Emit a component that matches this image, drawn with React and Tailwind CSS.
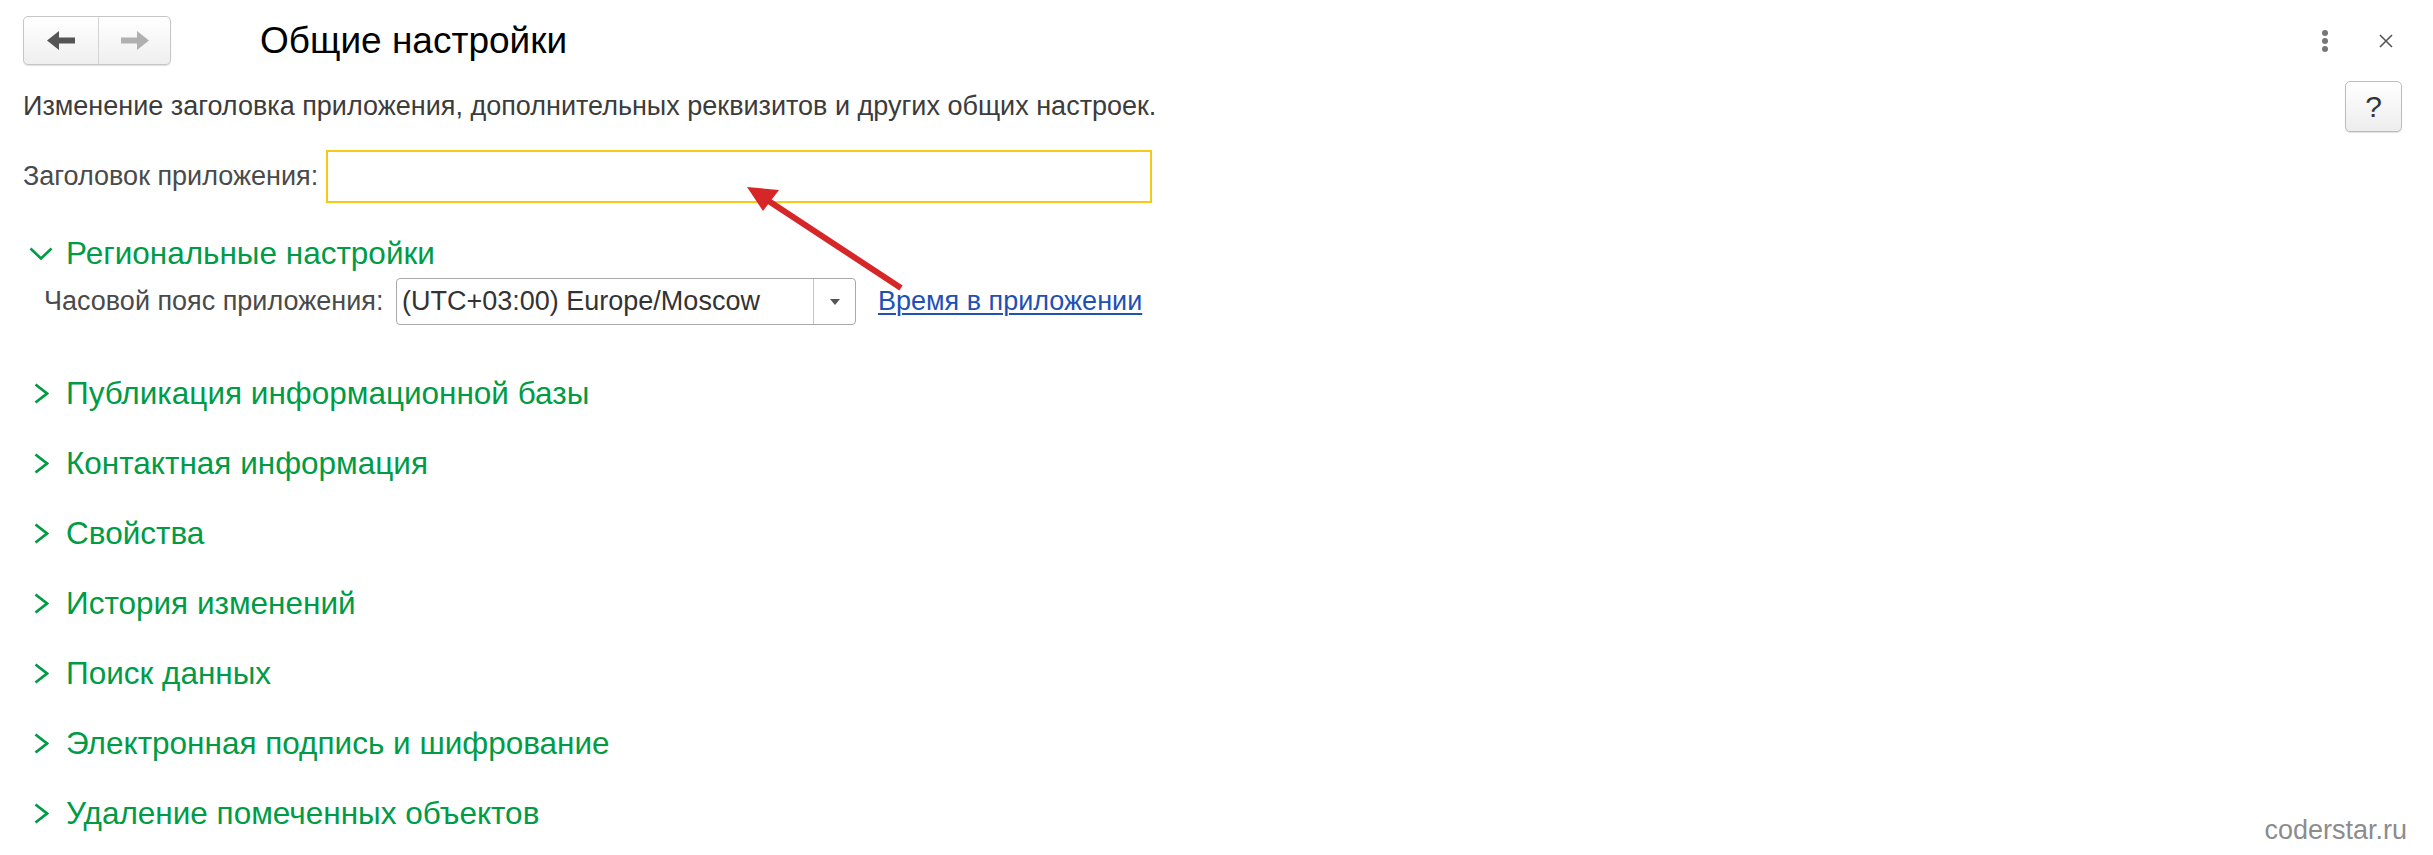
import React from 'react';

const sections = [
  'Публикация информационной базы',
  'Контактная информация',
  'Свойства',
  'История изменений',
  'Поиск данных',
  'Электронная подпись и шифрование',
  'Удаление помеченных объектов',
];

function ChevronRight() {
  return (
    <svg width="15" height="21" viewBox="0 0 15 21" fill="none">
      <path d="M1.5 1.5 L13 10.5 L1.5 19.5" stroke="#009b45" strokeWidth="2.8" />
    </svg>
  );
}

function ChevronDown() {
  return (
    <svg width="24" height="13" viewBox="0 0 24 13" fill="none">
      <path d="M1.5 1.5 L12 11.5 L22.5 1.5" stroke="#009b45" strokeWidth="2.6" />
    </svg>
  );
}

function NavArrow({ dir, color }) {
  const pts = dir === 'left'
    ? '0,9.5 12,0 12,6.5 28,6.5 28,12.5 12,12.5 12,19'
    : '28,9.5 16,0 16,6.5 0,6.5 0,12.5 16,12.5 16,19';
  return (
    <svg width="28" height="19" viewBox="0 0 28 19">
      <polygon points={pts} fill={color} />
    </svg>
  );
}

export default function App() {
  return (
    <div className="relative h-[855px] w-full overflow-hidden bg-white pt-[16px] font-['Liberation_Sans',Arial,sans-serif]">
      {/* header */}
      <div className="flex h-[49px] items-center pl-[23px] pr-[40px]">
        <div className="flex h-[49px] w-[148px] rounded-[5px] border border-[#c6c6c6] bg-linear-to-b from-white to-[#efefef] shadow-[0_1px_1px_rgba(0,0,0,0.12)]">
          <div className="flex w-[75px] items-center justify-center border-r border-[#d4d4d4]">
            <NavArrow dir="left" color="#555555" />
          </div>
          <div className="flex flex-1 items-center justify-center">
            <NavArrow dir="right" color="#b0b0b0" />
          </div>
        </div>
        <h1 className="ml-[89px] text-[37px] leading-[42px] text-black">Общие настройки</h1>
        <div className="ml-auto flex items-center gap-[51px]">
          <div className="flex flex-col gap-[2px]">
            <span className="h-[6px] w-[6px] rounded-full bg-[#777]" />
            <span className="h-[6px] w-[6px] rounded-full bg-[#777]" />
            <span className="h-[6px] w-[6px] rounded-full bg-[#777]" />
          </div>
          <svg width="14" height="14" viewBox="0 0 14 14">
            <path d="M1 1 L13 13 M13 1 L1 13" stroke="#555" strokeWidth="1.6" />
          </svg>
        </div>
      </div>

      {/* description */}
      <div className="mt-[16px] flex h-[51px] items-center justify-between pl-[23px] pr-[31px]">
        <p className="text-[27px] leading-[31px] text-[#3c3c3c]">
          Изменение заголовка приложения, дополнительных реквизитов и других общих настроек.
        </p>
        <button className="flex h-[51px] w-[57px] items-center justify-center rounded-[5px] border border-[#bcbcbc] bg-linear-to-b from-white to-[#ededed] text-[30px] text-[#333] shadow-[0_1px_1px_rgba(0,0,0,0.12)]">
          ?
        </button>
      </div>

      {/* app title */}
      <div className="mt-[18px] flex items-center pl-[23px]">
        <span className="w-[303px] text-[27px] leading-[31px] text-[#4a4a4a]">Заголовок приложения:</span>
        <div className="h-[53px] w-[826px] border-2 border-[#f6c915] bg-white" />
      </div>

      {/* regional settings */}
      <div className="mt-[30px] flex h-[40px] items-center pl-[29px]">
        <div className="flex w-[24px] justify-center">
          <ChevronDown />
        </div>
        <span className="ml-[13px] text-[31.5px] leading-[36px] text-[#009b45]">Региональные настройки</span>
      </div>
      <div className="mt-[5px] flex h-[47px] items-center pl-[44px]">
        <span className="w-[352px] text-[27px] leading-[31px] text-[#4a4a4a]">Часовой пояс приложения:</span>
        <div className="flex h-[47px] w-[460px] rounded-[4px] border border-[#a9a9a9] bg-white">
          <span className="flex flex-1 items-center pl-[5px] text-[27px] leading-[31px] text-[#333]">(UTC+03:00) Europe/Moscow</span>
          <div className="flex w-[42px] items-center justify-center border-l border-[#c4c4c4]">
            <svg width="10" height="6" viewBox="0 0 10 6">
              <polygon points="0,0 10,0 5,6" fill="#555" />
            </svg>
          </div>
        </div>
        <a className="ml-[22px] text-[27px] leading-[31px] text-[#1f50b4] underline decoration-2 underline-offset-[3px]">
          Время в приложении
        </a>
      </div>

      {/* collapsed groups */}
      <div className="mt-[33px] flex flex-col">
        {sections.map(s => (
          <div key={s} className="flex h-[70px] items-center pl-[29px]">
            <div className="flex w-[24px] justify-center">
              <ChevronRight />
            </div>
            <span className="ml-[13px] text-[31.5px] leading-[36px] text-[#009b45]">{s}</span>
          </div>
        ))}
      </div>

      {/* annotation arrow */}
      <svg className="pointer-events-none absolute left-0 top-0" width="2433" height="855">
        <line x1="901" y1="288" x2="758" y2="194" stroke="#d62628" strokeWidth="6" />
        <polygon points="747,187 779,190 763,211" fill="#d62628" />
      </svg>

      <div className="absolute right-[26px] top-[815px] text-[27px] leading-[31px] text-[#8c8c8c]">coderstar.ru</div>
    </div>
  );
}
